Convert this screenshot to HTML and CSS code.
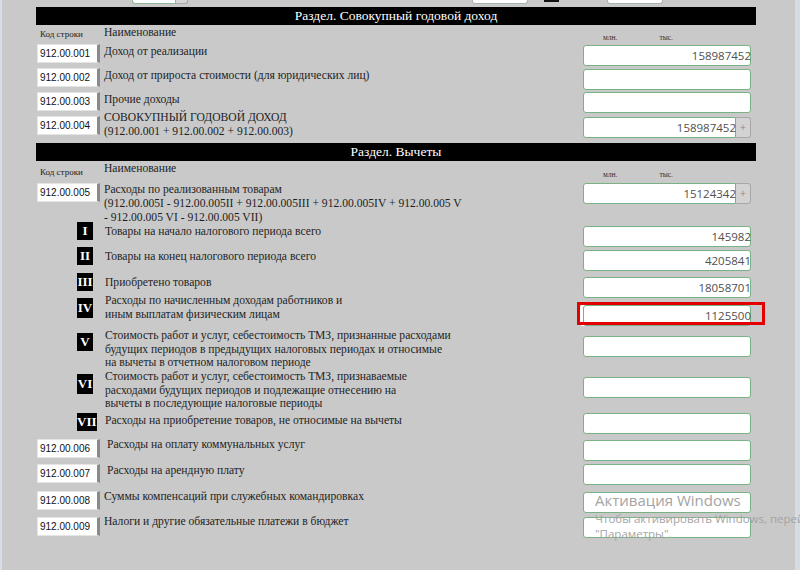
FILE: index.html
```html
<!DOCTYPE html>
<html lang="ru">
<head>
<meta charset="utf-8">
<title>Декларация</title>
<link rel="stylesheet" href="styles.css">
</head>
<body>
<div class="page">
  <div class="topbar">
    <div class="tb-a"></div><div class="tb-a-btn"></div>
    <div class="tb-b"></div>
    <div class="tb-c"></div>
    <div class="tb-d"></div>
  </div>
  <div class="form">
    <div class="bar">Раздел. Совокупный годовой доход</div>
    <div class="row hdr hdr1">
      <div class="hdr-code">Код строки</div>
      <div class="hdr-name">Наименование</div>
      <div class="hdr-units"><span class="u-mln">млн.</span><span class="u-tys">тыс.</span></div>
    </div>

    <div class="row h24">
      <div class="code">912.00.001</div>
      <div class="label">Доход от реализации</div>
      <div class="field"><span class="val">158987452</span></div>
    </div>
    <div class="row h24">
      <div class="code">912.00.002</div>
      <div class="label">Доход от прироста стоимости (для юридических лиц)</div>
      <div class="field"></div>
    </div>
    <div class="row h24">
      <div class="code">912.00.003</div>
      <div class="label">Прочие доходы</div>
      <div class="field fm0"></div>
    </div>
    <div class="row h27">
      <div class="code">912.00.004</div>
      <div class="label lm-6">СОВОКУПНЫЙ ГОДОВОЙ ДОХОД<br>(912.00.001 + 912.00.002 + 912.00.003)</div>
      <div class="field-group"><div class="field part"><span class="val">158987452</span></div><div class="plus">+</div></div>
    </div>

    <div class="bar">Раздел. Вычеты</div>
    <div class="row hdr hdr2">
      <div class="hdr-code">Код строки</div>
      <div class="hdr-name">Наименование</div>
      <div class="hdr-units"><span class="u-mln">млн.</span><span class="u-tys">тыс.</span></div>
    </div>

    <div class="row h39">
      <div class="code">912.00.005</div>
      <div class="label lm-1">Расходы по реализованным товарам<br>(912.00.005I - 912.00.005II + 912.00.005III + 912.00.005IV + 912.00.005 V<br>- 912.00.005 VI - 912.00.005 VII)</div>
      <div class="field-group fm0"><div class="field part"><span class="val">15124342</span></div><div class="plus">+</div></div>
    </div>
    <div class="row h25 sub">
      <div class="roman-cell"><span class="roman">I</span></div>
      <div class="label lm2">Товары на начало налогового периода всего</div>
      <div class="field fm4"><span class="val">145982</span></div>
    </div>
    <div class="row h26 sub">
      <div class="roman-cell"><span class="roman">II</span></div>
      <div class="label lm2">Товары на конец налогового периода всего</div>
      <div class="field fm3"><span class="val">4205841</span></div>
    </div>
    <div class="row h25 sub">
      <div class="roman-cell"><span class="roman">III</span></div>
      <div class="label lm2">Приобретено товаров</div>
      <div class="field fm4"><span class="val">18058701</span></div>
    </div>
    <div class="row h35 sub">
      <div class="roman-cell"><span class="roman tall">IV</span></div>
      <div class="label lm-5">Расходы по начисленным доходам работников и<br>иным выплатам физическим лицам</div>
      <div class="field fm7 hl"><span class="val">1125500</span></div>
    </div>
    <div class="row h41 sub">
      <div class="roman-cell"><span class="roman">V</span></div>
      <div class="label lm-5 tight">Стоимость работ и услуг, себестоимость ТМЗ, признанные расходами<br>будущих периодов в предыдущих налоговых периодах и относимые<br>на вычеты в отчетном налоговом периоде</div>
      <div class="field fm3"></div>
    </div>
    <div class="row h39 sub">
      <div class="roman-cell"><span class="roman tall">VI</span></div>
      <div class="label lm-5 tight">Стоимость работ и услуг, себестоимость ТМЗ, признаваемые<br>расходами будущих периодов и подлежащие отнесению на<br>вычеты в последующие налоговые периоды</div>
      <div class="field fm3"></div>
    </div>
    <div class="row h26 sub">
      <div class="roman-cell"><span class="roman">VII</span></div>
      <div class="label">Расходы на приобретение товаров, не относимые на вычеты</div>
      <div class="field fm0"></div>
    </div>

    <div class="row h25">
      <div class="code">912.00.006</div>
      <div class="label lm-2 ind">Расходы на оплату коммунальных услуг</div>
      <div class="field"></div>
    </div>
    <div class="row h27">
      <div class="code">912.00.007</div>
      <div class="label lm-1 ind">Расходы на арендную плату</div>
      <div class="field fm0"></div>
    </div>
    <div class="row h26">
      <div class="code">912.00.008</div>
      <div class="label lm-2">Суммы компенсаций при служебных командировках</div>
      <div class="field"></div>
    </div>
    <div class="row h26">
      <div class="code">912.00.009</div>
      <div class="label lm-3">Налоги и другие обязательные платежи в бюджет</div>
      <div class="field fm0"></div>
    </div>
  </div>

  <div class="watermark">
    <div class="wm-title">Активация Windows</div>
    <div class="wm-text">Чтобы активировать Windows, перейдите в раздел</div>
    <div class="wm-text">"Параметры".</div>
  </div>
</div>
</body>
</html>
```

FILE: styles.css
```css
html, body {
  margin: 0;
  padding: 0;
}
body {
  background: #d6dce3;
  overflow: hidden;
  width: 800px;
  height: 570px;
  font-family: "Liberation Serif", "Times New Roman", serif;
  color: #1e1e1e;
}
.page {
  position: relative;
  width: 759px;
  height: 570px;
  margin-left: 2px;
  padding-left: 34px;
  background: #c9c9c9;
}

/* top fragments of cut-off controls */
.topbar {
  display: flex;
  align-items: flex-start;
  height: 7px;
}
.tb-a {
  margin-left: 96px;
  width: 43px;
  height: 4px;
  background: #fff;
  border: 1px solid #8bbb92;
  border-top: 0;
  border-right: 0;
  border-radius: 0 0 0 3px;
  box-sizing: border-box;
}
.tb-a-btn {
  width: 13px;
  height: 4px;
  background: #d6d6d6;
  border: 1px solid #a9a9a9;
  border-top: 0;
  border-radius: 0 0 3px 0;
  box-sizing: border-box;
}
.tb-b {
  margin-left: 284px;
  width: 56px;
  height: 4px;
  background: #fff;
  border: 1px solid #a9b4aa;
  border-top: 0;
  border-radius: 0 0 3px 3px;
  box-sizing: border-box;
}
.tb-c {
  margin-left: 16px;
  width: 15px;
  height: 2px;
  background: #111;
}
.tb-d {
  margin-left: 48px;
  width: 56px;
  height: 4px;
  background: #fff;
  border: 1px solid #a9b4aa;
  border-top: 0;
  border-radius: 0 0 3px 3px;
  box-sizing: border-box;
}

.form {
  width: 720px;
}
.bar {
  height: 18px;
  line-height: 18px;
  background: #000;
  color: #fff;
  text-align: center;
  font-size: 13.5px;
}

.row {
  display: grid;
  grid-template-columns: 68px 1fr 168px;
  align-items: start;
  padding-right: 5px;
}
.h24 { height: 24px; }
.h25 { height: 25px; }
.h26 { height: 26px; }
.h27 { height: 27px; }
.h35 { height: 35px; }
.h39 { height: 39px; }
.h41 { height: 41px; }

.hdr1 { height: 19px; }
.hdr2 { height: 22px; }
.hdr-code {
  margin-left: 4px;
  font-size: 9px;
  line-height: 12px;
  margin-top: 3px;
  color: #222;
}
.hdr-name {
  font-size: 11.6px;
  line-height: 14px;
  margin-top: 1px;
  color: #222;
}
.hdr2 .hdr-code { margin-top: 5px; }
.hdr2 .hdr-name { margin-top: 1px; }
.hdr-units {
  display: flex;
  font-size: 7.5px;
  line-height: 10px;
  margin-top: 8px;
  color: #333;
}
.hdr2 .hdr-units { margin-top: 9px; }
.u-mln { margin-left: 20px; }
.u-tys { margin-left: 42px; }

.code {
  margin-left: 1px;
  width: 63px;
  height: 19px;
  box-sizing: border-box;
  background: #fff;
  border: 1px solid #e4e4e4;
  border-right: 3px solid #8a8a8a;
  font-family: "Liberation Sans", Arial, sans-serif;
  font-size: 10px;
  line-height: 17px;
  padding-left: 2px;
  color: #111;
}

.roman-cell {
  padding-left: 41px;
}
.roman {
  display: inline-block;
  min-width: 16px;
  height: 18px;
  line-height: 18px;
  background: #000;
  color: #fff;
  font-weight: bold;
  font-size: 13px;
  text-align: center;
  vertical-align: top;
}
.roman.tall {
  height: 20px;
  line-height: 20px;
}

.label {
  font-size: 11.6px;
  line-height: 14px;
  color: #1e1e1e;
  padding-top: 1px;
}
.label.tight { line-height: 13.5px; }
.sub .label { padding-left: 1px; }
.label.ind { padding-left: 3px; }
.lm2 { margin-top: 2px; }
.lm-1 { margin-top: -1px; }
.lm-2 { margin-top: -2px; }
.lm-3 { margin-top: -3px; }
.lm-5 { margin-top: -5px; }
.lm-6 { margin-top: -6px; }

.field {
  position: relative;
  height: 21px;
  box-sizing: border-box;
  margin-top: 1px;
  background: #fff;
  border: 1px solid #79b284;
  border-radius: 3px;
  text-align: right;
  font-family: "Open Sans", "Noto Sans", sans-serif;
  font-size: 11.5px;
  line-height: 19px;
  color: #505050;
}
.val {
  margin-right: -1px;
}
.fm0 { margin-top: 0; }
.fm3 { margin-top: 3px; }
.fm4 { margin-top: 4px; }
.fm7 { margin-top: 7px; }

.field-group {
  display: flex;
  margin-top: 1px;
}
.field-group.fm0 { margin-top: 0; }
.field.part {
  width: 153px;
  margin-top: 0;
  border-radius: 3px 0 0 3px;
}
.plus {
  width: 15px;
  height: 21px;
  box-sizing: border-box;
  background: #d3d3d3;
  border: 1px solid #a8a8a8;
  border-left: 0;
  border-radius: 0 3px 3px 0;
  font-family: "Open Sans", "Noto Sans", sans-serif;
  font-size: 11px;
  line-height: 18px;
  text-align: center;
  color: #8a8a8a;
}

/* highlighted field (red annotation frame) */
.hl {
  box-shadow: -3px 0 0 #fff;
}
.hl::after {
  content: "";
  position: absolute;
  top: -4px;
  left: -7px;
  right: -15px;
  bottom: 0;
  border: 3px solid #e30000;
}

.watermark {
  position: absolute;
  left: 593px;
  top: 489px;
  font-family: "Open Sans", "Noto Sans", sans-serif;
  color: #a4a4a4;
  white-space: nowrap;
}
.wm-title {
  font-size: 15px;
  line-height: 22px;
}
.wm-text {
  font-size: 11.5px;
  line-height: 15px;
}
```
